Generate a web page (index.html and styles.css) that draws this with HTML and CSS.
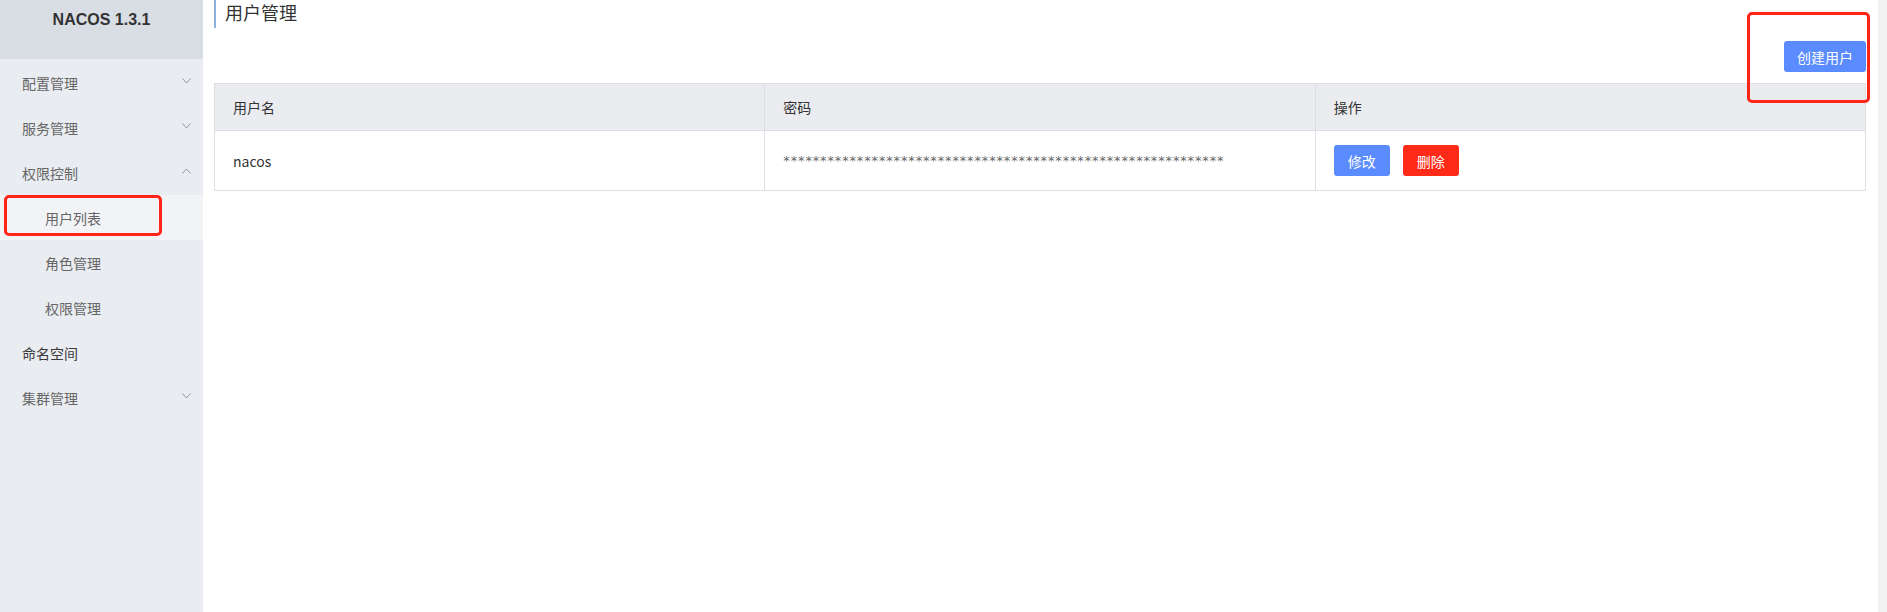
FILE: index.html
```html
<!DOCTYPE html>
<html lang="zh-CN">
<head>
<meta charset="utf-8">
<title>用户管理</title>
<link rel="stylesheet" href="styles.css">
</head>
<body>
<div class="app">
  <aside class="sidebar">
    <div class="brand">NACOS 1.3.1</div>
    <ul class="menu">
      <li class="item"><span>配置管理</span><svg class="chev" width="9" height="6" viewBox="0 0 9 6"><polyline points="0.5,0.5 4.5,5 8.5,0.5" fill="none" stroke="#8f969f" stroke-width="1"/></svg></li>
      <li class="item"><span>服务管理</span><svg class="chev" width="9" height="6" viewBox="0 0 9 6"><polyline points="0.5,0.5 4.5,5 8.5,0.5" fill="none" stroke="#8f969f" stroke-width="1"/></svg></li>
      <li class="item"><span>权限控制</span><svg class="chev" width="9" height="6" viewBox="0 0 9 6"><polyline points="0.5,5.5 4.5,1 8.5,5.5" fill="none" stroke="#8f969f" stroke-width="1"/></svg></li>
      <li class="item sub active"><span>用户列表</span><div class="mark"></div></li>
      <li class="item sub"><span>角色管理</span></li>
      <li class="item sub"><span>权限管理</span></li>
      <li class="item dark"><span>命名空间</span></li>
      <li class="item"><span>集群管理</span><svg class="chev" width="9" height="6" viewBox="0 0 9 6"><polyline points="0.5,0.5 4.5,5 8.5,0.5" fill="none" stroke="#8f969f" stroke-width="1"/></svg></li>
    </ul>
  </aside>
  <main class="main">
    <h1 class="title">用户管理</h1>
    <div class="toolbar">
      <button class="btn btn-primary create">创建用户</button>
      <div class="mark-create"></div>
    </div>
    <table class="table">
      <thead>
        <tr><th>用户名</th><th>密码</th><th>操作</th></tr>
      </thead>
      <tbody>
        <tr>
          <td>nacos</td>
          <td class="pwd">************************************************************</td>
          <td><div class="ops"><button class="btn btn-primary">修改</button><button class="btn btn-danger">删除</button></div></td>
        </tr>
      </tbody>
    </table>
  </main>
  <div class="scrollbar"></div>
</div>
</body>
</html>
```
FILE: styles.css
```css
* { box-sizing: border-box; }
html, body { margin: 0; padding: 0; height: 100%; }
body {
  font-family: "Noto Sans CJK SC", "Noto Sans", sans-serif;
  font-size: 14px;
  color: #333;
  background: #fff;
}
.app { display: flex; height: 612px; }

.sidebar {
  width: 203px;
  flex: none;
  background: #e9ecf1;
  height: 100%;
}
.brand {
  height: 59px;
  background: #d9dde4;
  text-align: center;
  font-family: "Liberation Sans", Arial, sans-serif;
  font-weight: bold;
  font-size: 16px;
  line-height: 20px;
  padding-top: 10px;
  color: #333;
}
.menu { list-style: none; margin: 0; padding: 1px 0 0; }
.item {
  position: relative;
  height: 45px;
  display: flex;
  align-items: center;
  justify-content: space-between;
  padding: 0 12px 0 22px;
  color: #666;
}
.item.sub { padding-left: 45px; }
.item.dark { color: #3a3a3a; }
.item.active { background: #f2f3f7; }
.chev { margin-top: -4px; }
.mark {
  position: absolute;
  left: 4px;
  top: 0;
  width: 158px;
  height: 41px;
  border: 3px solid #ff2418;
  border-radius: 5px;
}

.main {
  flex: 1;
  padding: 0 12px 0 11px;
  min-width: 0;
}
.title {
  margin: 0;
  height: 28px;
  border-left: 2px solid #8db2e0;
  padding-left: 9px;
  font-size: 18px;
  font-weight: normal;
  line-height: 24px;
  color: #333;
}
.toolbar {
  position: relative;
  display: flex;
  justify-content: flex-end;
  margin-top: 13px;
  margin-bottom: 11px;
}
.mark-create {
  position: absolute;
  right: -4px;
  top: -29px;
  width: 123px;
  height: 91px;
  border: 3px solid #ff2418;
  border-radius: 5px;
}
.btn {
  border: none;
  border-radius: 3px;
  height: 31px;
  padding: 0 13px;
  font-family: "Noto Sans CJK SC", sans-serif;
  font-size: 14px;
  color: #fff;
  cursor: pointer;
}
.btn-primary { background: #5a8cff; }
.btn-danger { background: #ff2a17; }
.create { width: 82px; }

.table {
  width: 100%;
  border-collapse: collapse;
  table-layout: fixed;
  border: 1px solid #dcdee3;
}
.table th, .table td {
  text-align: left;
  padding: 0 18px;
  border-left: 1px solid #dcdee3;
}
.table th {
  height: 47px;
  background: #ebecf0;
  font-weight: normal;
  color: #333;
  border-bottom: 1px solid #dcdee3;
}
.table td { height: 60px; color: #333; }
.table .pwd {
  font-family: "DejaVu Sans", sans-serif;
  font-size: 13px;
  letter-spacing: 0.85px;
  color: #666;
  white-space: nowrap;
  overflow: hidden;
}
.ops { display: flex; gap: 13px; }
.ops .btn { width: 56px; padding: 0; }

.scrollbar {
  width: 9px;
  flex: none;
  background: #f1f1f1;
  height: 100%;
}
```
